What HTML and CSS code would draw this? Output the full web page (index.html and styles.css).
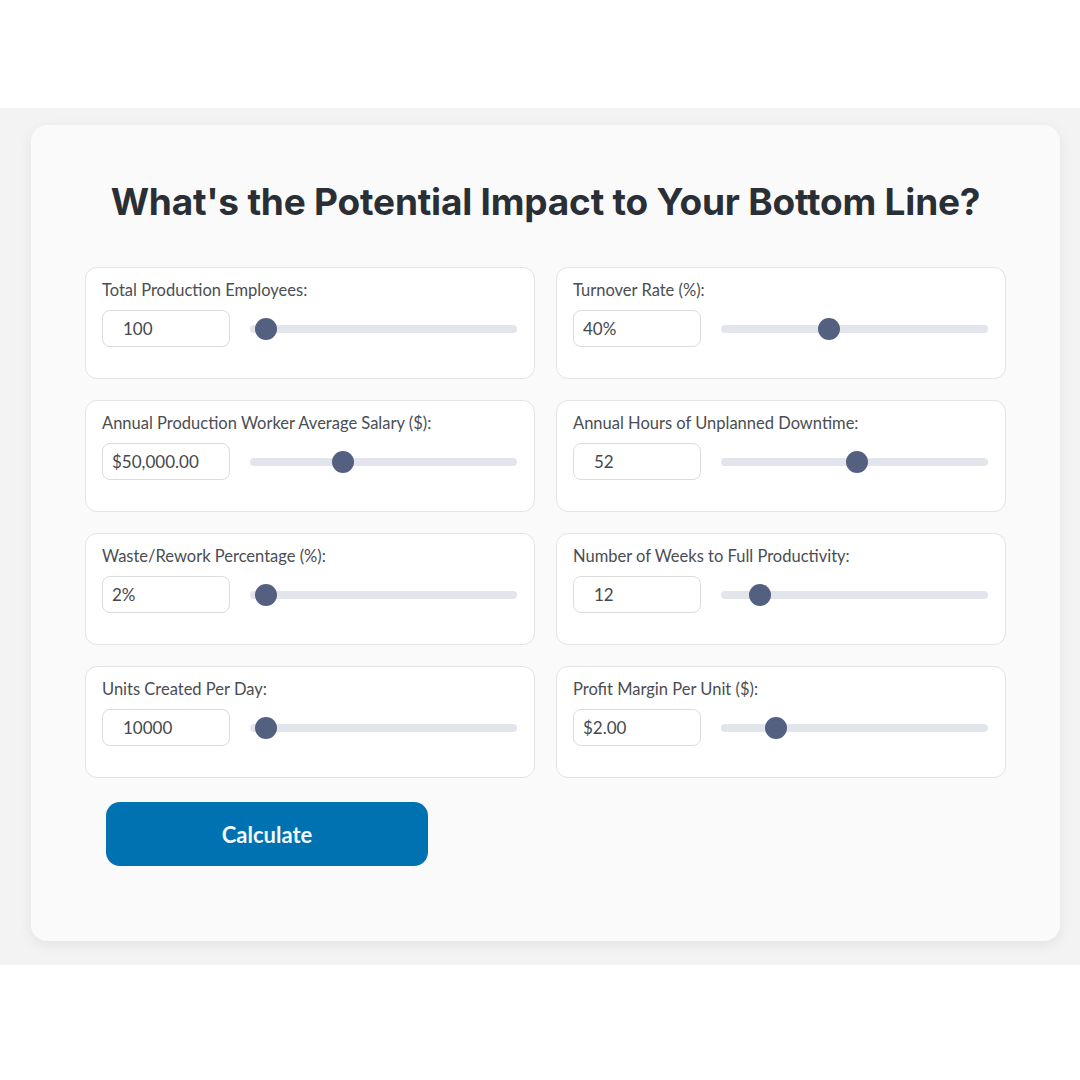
FILE: index.html
```html
<!DOCTYPE html>
<html>
<head>
<meta charset="utf-8">
<link rel="stylesheet" href="styles.css">
</head>
<body>
<div class="band">
  <div class="card">
    <h1 class="title">What's the Potential Impact to Your Bottom Line?</h1>
    <div class="grid">
      <div class="field">
        <div class="label">Total Production Employees:</div>
        <div class="control">
          <div class="input num">100</div>
          <div class="track"><div class="thumb" style="--f:0"></div></div>
        </div>
      </div>
      <div class="field">
        <div class="label">Turnover Rate (%):</div>
        <div class="control">
          <div class="input">40%</div>
          <div class="track"><div class="thumb" style="--f:0.39"></div></div>
        </div>
      </div>
      <div class="field">
        <div class="label">Annual Production Worker Average Salary ($):</div>
        <div class="control">
          <div class="input">$50,000.00</div>
          <div class="track"><div class="thumb" style="--f:0.328"></div></div>
        </div>
      </div>
      <div class="field">
        <div class="label">Annual Hours of Unplanned Downtime:</div>
        <div class="control">
          <div class="input num">52</div>
          <div class="track"><div class="thumb" style="--f:0.51"></div></div>
        </div>
      </div>
      <div class="field">
        <div class="label">Waste/Rework Percentage (%):</div>
        <div class="control">
          <div class="input">2%</div>
          <div class="track"><div class="thumb" style="--f:0"></div></div>
        </div>
      </div>
      <div class="field">
        <div class="label">Number of Weeks to Full Productivity:</div>
        <div class="control">
          <div class="input num">12</div>
          <div class="track"><div class="thumb" style="--f:0.098"></div></div>
        </div>
      </div>
      <div class="field">
        <div class="label">Units Created Per Day:</div>
        <div class="control">
          <div class="input num">10000</div>
          <div class="track"><div class="thumb" style="--f:0"></div></div>
        </div>
      </div>
      <div class="field">
        <div class="label">Profit Margin Per Unit ($):</div>
        <div class="control">
          <div class="input">$2.00</div>
          <div class="track"><div class="thumb" style="--f:0.166"></div></div>
        </div>
      </div>
    </div>
    <button class="calc">Calculate</button>
  </div>
</div>
</body>
</html>
```
FILE: styles.css
```css
* { box-sizing: border-box; }
html, body { margin: 0; padding: 0; background: #ffffff; }
body { font-family: Lato, "Open Sans", sans-serif; }
.band {
  margin-top: 108px;
  background: #f3f3f3;
  padding: 17px 20px 24px 31px;
}
.card {
  background: #fafafa;
  border-radius: 16px;
  box-shadow: 0 4px 14px rgba(0,0,0,0.07);
  padding: 54px 54px 75px 54px;
}
.title {
  margin: 0 0 42px 0;
  text-align: center;
  font-family: Inter, "Liberation Sans", sans-serif;
  font-weight: 700;
  font-size: 37px;
  line-height: 46px;
  color: #2a2f36;
  letter-spacing: -0.2px;
}
.grid {
  display: grid;
  grid-template-columns: 1fr 1fr;
  column-gap: 21px;
  row-gap: 21px;
  grid-auto-rows: 112px;
}
.field {
  background: #ffffff;
  border: 1px solid #e3e3e3;
  border-radius: 12px;
  padding: 12px 17px 0 16px;
}
.label {
  font-size: 16.5px;
  line-height: 21px;
  color: #4a4d52;
  margin-bottom: 9px;
}
.control {
  display: flex;
  align-items: center;
  gap: 20px;
}
.input {
  width: 128px;
  height: 37px;
  border: 1px solid #dcdcdc;
  border-radius: 8px;
  background: #fff;
  font-size: 17px;
  line-height: 35px;
  color: #45484d;
  padding-left: 9px;
}
.input.num { padding-left: 20px; }
.track {
  position: relative;
  flex: 1;
  height: 8px;
  border-radius: 4px;
  background: #e2e5ec;
}
.thumb {
  position: absolute;
  top: -7px;
  left: calc(5px + (100% - 32px) * var(--f));
  width: 22px;
  height: 22px;
  border-radius: 50%;
  background: #536080;
}
.calc {
  display: block;
  margin: 24px 0 0 21px;
  width: 322px;
  height: 64px;
  border: none;
  border-radius: 14px;
  background: #0072b1;
  color: #f4f7fa;
  font-family: Lato, "Open Sans", sans-serif;
  font-weight: 700;
  font-size: 22px;
}
```
